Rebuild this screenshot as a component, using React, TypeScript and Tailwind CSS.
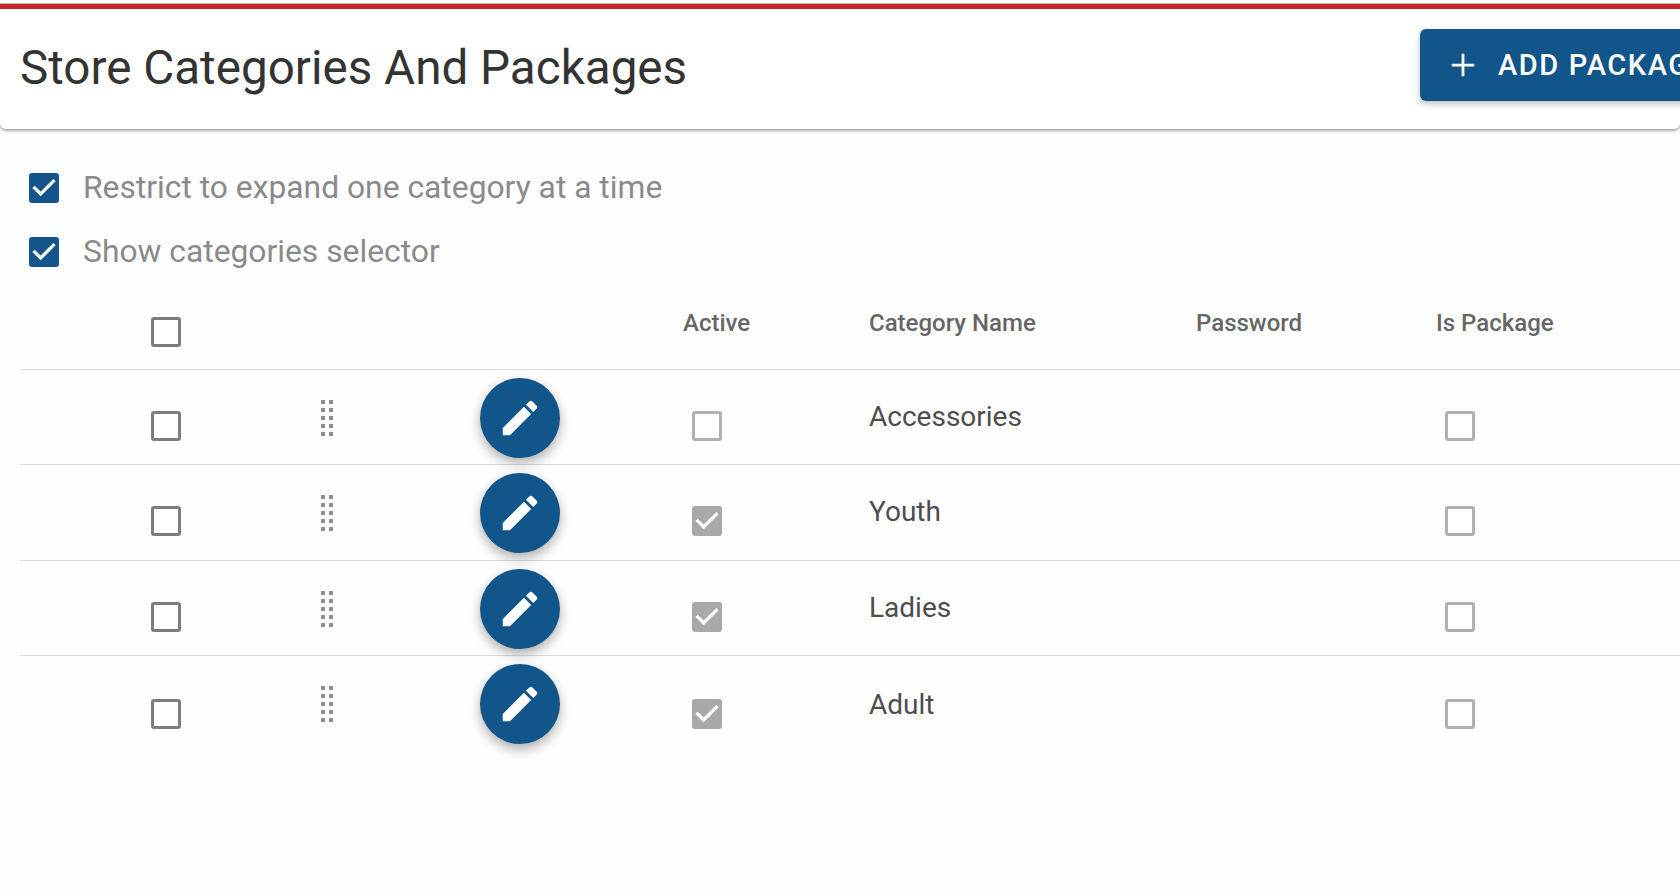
const COLS = "grid grid-cols-[296px_163.5px_203.5px_186px_327px_240px_1fr]";

const rows = [
  { name: "Accessories", active: false, nudge: "pt-[41px]", textNudge: "pt-[29px]", height: "h-[95.4px]" },
  { name: "Youth", active: true, nudge: "pt-[40.6px]", textNudge: "pt-[29px]", height: "h-[95.4px]" },
  { name: "Ladies", active: true, nudge: "pt-[41px]", textNudge: "pt-[29px]", height: "h-[95.4px]" },
  { name: "Adult", active: true, nudge: "pt-[43px]", textNudge: "pt-[31px]", height: "h-[96px]" },
];

function CheckMark() {
  return (
    <svg viewBox="3 3 18 18" className="w-[30px] h-[30px]" fill="white">
      <path d="M10 17l-5-5 1.41-1.41L10 14.17l7.59-7.59L19 8l-9 9z" />
    </svg>
  );
}

function Box({ checked, tone = "dark" }: { checked?: boolean; tone?: "dark" | "light" | "blue" }) {
  if (checked) {
    const bg = tone === "blue" ? "bg-[#12558a]" : "bg-[#a9a9a9]";
    return (
      <span className={`flex w-[30px] h-[30px] items-center justify-center rounded-[3px] ${bg}`}>
        <CheckMark />
      </span>
    );
  }
  const border = tone === "light" ? "border-[#b0b0b0]" : "border-[#7d7d7d]";
  return <span className={`block w-[30px] h-[30px] rounded-[3px] border-[3px] bg-white ${border}`} />;
}

function DragHandle() {
  const dots = [0, 1, 2, 3, 4];
  return (
    <svg width="14" height="38" viewBox="0 0 14 38" fill="#8c8c8c">
      {dots.map((i) => (
        <g key={i}>
          <rect x="1" y={1 + i * 8} width="4" height="4" rx="0.6" />
          <rect x="9" y={1 + i * 8} width="4" height="4" rx="0.6" />
        </g>
      ))}
    </svg>
  );
}

function EditFab() {
  return (
    <button className="flex w-[80px] h-[80px] items-center justify-center rounded-full bg-[#12558a] shadow-[0_5px_12px_rgba(0,0,0,0.32)]">
      <svg viewBox="0 0 24 24" className="w-[46px] h-[46px]" fill="white">
        <path d="M3 17.25V21h3.75L17.81 9.94l-3.75-3.75L3 17.25zM20.71 7.04c.39-.39.39-1.02 0-1.41l-2.34-2.34c-.39-.39-1.02-.39-1.41 0l-1.83 1.83 3.75 3.75 1.83-1.83z" />
      </svg>
    </button>
  );
}

function Option({ label }: { label: string }) {
  return (
    <label className="flex items-center gap-[24px] h-[30px]">
      <Box checked tone="blue" />
      <span className="text-[31.8px] text-[#8a8a8a] leading-none">{label}</span>
    </label>
  );
}

export default function App() {
  return (
    <div className="w-[1680px] h-[896px] overflow-hidden bg-[#fefefe] font-['Roboto',sans-serif] pt-[3px]">
      <div className="border-t border-t-[#b5b5b5]">
        <div className="border-t-[5px] border-t-[#d0232b]">
          <div className="flex items-center justify-between h-[120px] pl-[20px] bg-white rounded-b-[6px] shadow-[0_2px_3px_rgba(0,0,0,0.35)]">
            <h1 className="text-[47.6px] font-normal text-[#333333] leading-none">Store Categories And Packages</h1>
            <button className="flex shrink-0 items-center w-[300px] h-[72px] -mr-[40px] -mt-[8px] pl-[28px] gap-[20px] rounded-[6px] bg-[#12558a] shadow-[0_3px_6px_rgba(0,0,0,0.25)] text-white text-[29px] font-medium tracking-[1.6px] whitespace-nowrap">
              <svg viewBox="0 0 24 24" className="w-[30px] h-[30px]" fill="none" stroke="white" strokeWidth="2.2">
                <path d="M12 3v18M3 12h18" />
              </svg>
              <span className="pt-[2px]">ADD PACKAGE</span>
            </button>
          </div>
        </div>
      </div>

      <div className="flex flex-col gap-[34px] pl-[29px] pt-[44px]">
        <Option label="Restrict to expand one category at a time" />
        <Option label="Show categories selector" />
      </div>

      <div className="ml-[20px] mt-[9px]">
        <div className={`${COLS} h-[94px] border-b border-[#dddddd]`}>
          <div className="pl-[131px] pt-[41px]"><Box /></div>
          <div />
          <div />
          <div className="pt-[33px] text-[24px] font-medium text-[#666666] leading-[28px]">Active</div>
          <div className="pt-[33px] text-[24px] font-medium text-[#666666] leading-[28px]">Category Name</div>
          <div className="pt-[33px] text-[24px] font-medium text-[#666666] leading-[28px]">Password</div>
          <div className="pt-[33px] text-[24px] font-medium text-[#666666] leading-[28px]">Is Package</div>
        </div>
        {rows.map((r, i) => (
          <div key={r.name} className={`${COLS} ${r.height} ${i < 3 ? "border-b border-[#dddddd]" : ""}`}>
            <div className={`pl-[131px] ${r.nudge}`}><Box /></div>
            <div className="pl-[4px] pt-[29px]"><DragHandle /></div>
            <div className="pt-[8px]"><EditFab /></div>
            <div className={`pl-[9px] ${r.nudge}`}><Box checked={r.active} tone="light" /></div>
            <div className={`${r.textNudge} text-[28px] text-[#4d4d4d] leading-[36px]`}>{r.name}</div>
            <div />
            <div className={`pl-[8.5px] ${r.nudge}`}><Box tone="light" /></div>
          </div>
        ))}
      </div>
    </div>
  );
}
